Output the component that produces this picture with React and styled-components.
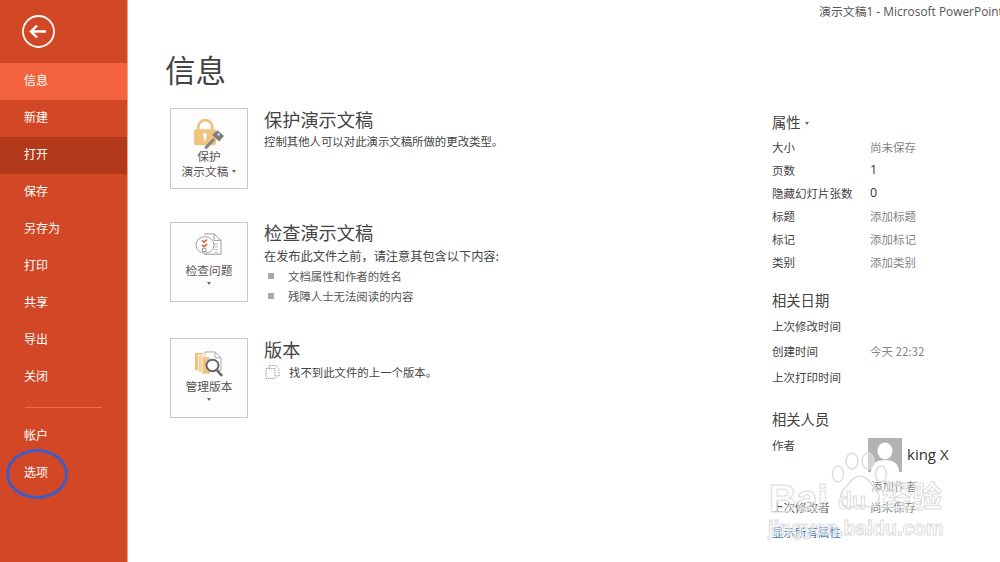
import React from "react";
import styled, { createGlobalStyle } from "styled-components";

const Global = createGlobalStyle`
  html, body { margin: 0; padding: 0; background: #fff; }
  body { font-family: "Noto Sans CJK SC", "Open Sans", sans-serif; }
  * { box-sizing: border-box; }
`;
const FONT = `"Open Sans", "Noto Sans CJK SC", sans-serif`;

const Page = styled.div`
  position: relative; display: flex; width: 1000px; height: 562px; overflow: hidden; background: #fff;
`;
const Sidebar = styled.nav`
  position: relative; flex: 0 0 128px; height: 100%; background: #d24726; border-right: 1px solid #f0a08a;
  padding-top: 15px; display: flex; flex-direction: column;
`;
const BackButton = styled.div`
  margin: 0 0 15px 22px; width: 33px; height: 33px; display: flex;
`;
const NavItem = styled.div`
  height: 37px; padding: 0 0 4px 24px; display: flex; align-items: center; font-size: 12px; color: #fff;
  background: ${p => (p.$active ? "#f2633e" : p.$hover ? "#b23a1a" : "transparent")};
`;
const NavRule = styled.div`
  height: 1px; margin: 11px 25px 10px 25px; background: #ea6f4f;
`;
const CircleMark = styled.div`
  position: absolute; left: 6px; top: 449px; width: 62px; height: 50px; border: 3px solid #3f5cc6; border-radius: 50%;
`;
const Main = styled.main`
  flex: 1; display: flex; flex-direction: column; min-width: 0;
`;
const TitleBar = styled.div`
  height: 22px; padding-left: 691px; font-family: ${FONT}; font-size: 11.9px; line-height: 22px; color: #555; white-space: nowrap; overflow: hidden;
`;
const Content = styled.div`
  flex: 1; display: flex;
`;
const Center = styled.section`
  flex: 0 0 644px; padding-left: 37px;
`;
const PageTitle = styled.h1`
  margin: 25px 0 0 0; font-size: 30.5px; line-height: 44px; font-weight: 400; color: #444;
`;
const Block = styled.div`
  display: flex; align-items: flex-start; margin: ${p => p.$top}px 0 0 5px;
`;
const Card = styled.div`
  flex: 0 0 78px; height: ${p => p.$h || 80}px; border: 1px solid #c9c9c9; background: #fdfdfd; display: flex; flex-direction: column; align-items: center;
  padding-top: ${p => p.$pt}px; color: #555; font-size: 11.7px; line-height: 15px; text-align: center; margin-right: 16px;
`;
const CardLabel = styled.div`
  margin-top: ${p => p.$mt || 0}px; white-space: nowrap;
`;
const Caret = styled.span`
  display: inline-block; width: 0; height: 0; border-left: 2.5px solid transparent; border-right: 2.5px solid transparent; border-top: 3px solid #666;
  margin: ${p => p.$block ? "5px 0 0 0" : "0 0 2px 4px"}; vertical-align: middle;
`;
const Text = styled.div`
  display: flex; flex-direction: column; margin-top: ${p => p.$shift || 0}px;
`;
const Heading = styled.h2`
  margin: 0; font-size: 18.2px; line-height: 22px; font-weight: 400; color: #444;
`;
const Desc = styled.p`
  margin: ${p => p.$mt}px 0 0 0; font-size: ${p => p.$size || 11.4}px; line-height: 20px; color: #444; display: flex; align-items: center; white-space: nowrap;
`;
const Bullet = styled.div`
  display: flex; align-items: center; height: 20px; font-size: 11.4px; color: #555;
  &::before { content: ""; width: 6px; height: 6px; background: #aaa; margin: 0 14px 0 4px; }
`;
const Aside = styled.aside`
  flex: 1; padding-top: 90px;
`;
const GroupTitle = styled.h3`
  margin: ${p => p.$mt || 0}px 0 ${p => p.$mb || 0}px 0; font-size: 14.3px; line-height: 20px; font-weight: 400; color: #444;
`;
const Row = styled.div`
  display: grid; grid-template-columns: 98px 1fr; height: ${p => p.$h || 23}px; align-items: center; font-size: 11.5px; color: #444;
`;
const Value = styled.span`
  color: ${p => (p.$plain ? "#333" : "#7d8588")}; font-family: ${p => (p.$plain ? FONT : "inherit")}; font-size: ${p => (p.$plain ? 12.5 : 11.5)}px;
`;
const Person = styled.div`
  display: grid; grid-template-columns: 96px 34px 1fr; font-size: 11.5px; color: #444; margin-top: 9px;
`;
const PersonLabel = styled.span`
  line-height: 14px;
`;
const PersonName = styled.span`
  padding: 7px 0 0 5px; font-family: ${FONT}; font-size: 15px; line-height: 18px; color: #333;
`;
const AddAuthor = styled.div`
  margin: 7px 0 0 99px; font-size: 11.5px; line-height: 14px; color: #7d8588;
`;
const EditorRow = styled(Row)`
  margin-top: 2px; height: 24px;
`;
const AllProps = styled.div`
  margin-top: 1px; font-size: 11.5px; line-height: 24px; color: #2f6fb3;
`;
const Watermark = styled.div`
  position: absolute; left: 764px; top: 450px; width: 190px; height: 92px; pointer-events: none;
`;
const WmPaw = styled.svg`
  position: absolute; left: 66px; top: 2px;
`;
const WmWord = styled.span`
  position: absolute; left: ${p => p.$x}px; top: ${p => p.$y}px; font-family: "Liberation Sans", sans-serif; font-size: ${p => p.$s}px; line-height: 1; font-weight: 700;
  color: rgba(255,255,255,.45); -webkit-text-stroke: 1px #dcdcdc; white-space: nowrap;
`;
const WmCjk = styled(WmWord)`
  font-family: "Noto Sans CJK SC", sans-serif;
`;

const BackIcon = () => (
  <svg width="33" height="33" viewBox="0 0 33 33" fill="none" stroke="#fff">
    <circle cx="16.5" cy="16.5" r="15.5" strokeWidth="1.8" />
    <path d="M9.5 16.5H24M15 10.5l-6 6 6 6" strokeWidth="2.4" />
  </svg>
);
const LockIcon = () => (
  <svg width="32" height="31" viewBox="0 0 30 29">
    <path d="M5 10V7.5a6.5 6.5 0 0 1 13 0V10" fill="none" stroke="#edc27c" strokeWidth="2.6" />
    <rect x="1" y="9.5" width="20.5" height="15" rx="1.5" fill="#efc47f" />
    <circle cx="11.2" cy="15" r="2" fill="#fff" />
    <rect x="10.2" y="15" width="2" height="5" fill="#fff" />
    <path d="M11.5 27.5l7-7.5 1.5-1" stroke="#888" strokeWidth="2.8" fill="none" />
    <path d="M18 15l5-4.5 6 5.5-4.5 5z" fill="#7c7c7c" />
    <circle cx="24" cy="14.5" r="1.1" fill="#ddd" />
  </svg>
);
const InspectIcon = () => (
  <svg width="28" height="24" viewBox="0 0 28 26" fill="none" preserveAspectRatio="none">
    <path d="M9 1h10l7 7v15H9" fill="#fff" stroke="#999" />
    <path d="M19 1v7h7" stroke="#999" />
    <path d="M19 12h4M19 15h4M19 18h4M19 21h4" stroke="#bbb" />
    <circle cx="10" cy="13" r="9" fill="#fff" stroke="#999" />
    <path d="M7 8l2 2 3-3M7 13l2 2 3-3" stroke="#d9542f" strokeWidth="1.5" />
    <rect x="7.5" y="17" width="3.5" height="3" stroke="#999" />
  </svg>
);
const VersionsIcon = () => (
  <svg width="30" height="27" viewBox="0 0 30 28" fill="none" preserveAspectRatio="none">
    <path d="M11 1h10l6 6v13H11z" fill="#fff" stroke="#aaa" />
    <path d="M21 1v6h6" stroke="#aaa" />
    <rect x="1" y="2" width="8" height="18" fill="#f0c078" />
    <rect x="4.500" y="4" width="8" height="18" fill="#f3cd92" stroke="#fff" strokeWidth=".8" />
    <rect x="8" y="6" width="8" height="18" fill="#efc47f" stroke="#fff" strokeWidth=".8" />
    <circle cx="18.500" cy="15" r="6" fill="#fff" stroke="#666" strokeWidth="2" />
    <path d="M23 20l5 6" stroke="#666" strokeWidth="2.6" />
  </svg>
);
const DocIcon = () => (
  <svg width="15" height="14" viewBox="0 0 15 14" fill="none" stroke="#999" strokeDasharray="1.500 1" style={{ marginRight: 9, marginLeft: 1 }}>
    <path d="M1 3.500h9v10H1z" />
    <path d="M4 3V.5h7l3 3V11h-3" />
  </svg>
);
const Avatar = () => (
  <svg width="34" height="34" viewBox="0 0 34 34">
    <rect width="34" height="34" fill="#b3b3b3" />
    <ellipse cx="17" cy="13" rx="7.500" ry="8.500" fill="#fff" />
    <path d="M3 34c0-8 5-12 14-12s14 4 14 12z" fill="#fff" />
  </svg>
);
const PawMark = () => (
  <WmPaw width="62" height="62" viewBox="0 0 62 62" fill="rgba(255,255,255,.4)" stroke="#dcdcdc" strokeWidth="1.500">
    <ellipse cx="8" cy="22" rx="5.500" ry="8" />
    <ellipse cx="22" cy="9" rx="6" ry="8" />
    <ellipse cx="38" cy="9" rx="6" ry="8" />
    <ellipse cx="51" cy="22" rx="5.500" ry="8" />
    <path d="M30 24c7 0 10 7 16 13 6 7 3 18-6 18-5 0-7-2-10-2s-5 2-10 2c-9 0-12-11-6-18 6-6 9-13 16-13z" />
  </WmPaw>
);

const nav = ["信息", "新建", "打开", "保存", "另存为", "打印", "共享", "导出", "关闭"];
const props = [
  ["大小", "尚未保存"], ["页数", "1", true], ["隐藏幻灯片张数", "0", true],
  ["标题", "添加标题"], ["标记", "添加标记"], ["类别", "添加类别"],
];

export default function App() {
  return (
    <Page>
      <Global />
      <Sidebar>
        <BackButton><BackIcon /></BackButton>
        {nav.map((n, i) => <NavItem key={n} $active={i === 0} $hover={i === 2}>{n}</NavItem>)}
        <NavRule />
        <NavItem>帐户</NavItem>
        <NavItem>选项</NavItem>
        <CircleMark />
      </Sidebar>
      <Main>
        <TitleBar>演示文稿1 - Microsoft PowerPoint</TitleBar>
        <Content>
          <Center>
            <PageTitle>信息</PageTitle>
            <Block $top={17}>
              <Card $h={81} $pt={10}>
                <LockIcon />
                <CardLabel $mt={-2}>保护</CardLabel>
                <CardLabel>演示文稿<Caret /></CardLabel>
              </Card>
              <Text>
                <Heading>保护演示文稿</Heading>
                <Desc $mt={1}>控制其他人可以对此演示文稿所做的更改类型。</Desc>
              </Text>
            </Block>
            <Block $top={33}>
              <Card $pt={10}>
                <InspectIcon />
                <CardLabel $mt={5}>检查问题</CardLabel>
                <Caret $block />
              </Card>
              <Text $shift={-1}>
                <Heading>检查演示文稿</Heading>
                <Desc $mt={3} $size={12.2}>在发布此文件之前，请注意其包含以下内容:</Desc>
                <Bullet>文档属性和作者的姓名</Bullet>
                <Bullet>残障人士无法阅读的内容</Bullet>
              </Text>
            </Block>
            <Block $top={32}>
              <Card $pt={12}>
                <VersionsIcon />
                <CardLabel>管理版本</CardLabel>
                <Caret $block />
              </Card>
              <Text>
                <Heading>版本</Heading>
                <Desc $mt={2}><DocIcon />找不到此文件的上一个版本。</Desc>
              </Text>
            </Block>
          </Center>
          <Aside>
            <GroupTitle $mb={3}>属性<Caret /></GroupTitle>
            {props.map(([k, v, plain]) => <Row key={k}><span>{k}</span><Value $plain={plain}>{v}</Value></Row>)}
            <GroupTitle $mt={17} $mb={3}>相关日期</GroupTitle>
            <Row $h={25.5}><span>上次修改时间</span></Row>
            <Row $h={25.5}><span>创建时间</span><Value>今天 22:32</Value></Row>
            <Row $h={25.5}><span>上次打印时间</span></Row>
            <GroupTitle $mt={19}>相关人员</GroupTitle>
            <Person>
              <PersonLabel>作者</PersonLabel>
              <Avatar />
              <PersonName>king X</PersonName>
            </Person>
            <AddAuthor>添加作者</AddAuthor>
            <EditorRow><span>上次修改者</span><Value>尚未保存</Value></EditorRow>
            <AllProps>显示所有属性</AllProps>
          </Aside>
        </Content>
      </Main>
      <Watermark>
        <PawMark />
        <WmWord $x={5} $y={30} $s={38}>Bai</WmWord>
        <WmWord $x={74} $y={40} $s={23}>du</WmWord>
        <WmCjk $x={118} $y={29} $s={30}>经验</WmCjk>
        <WmWord $x={4} $y={68} $s={20}>jingyan.baidu.com</WmWord>
      </Watermark>
    </Page>
  );
}
